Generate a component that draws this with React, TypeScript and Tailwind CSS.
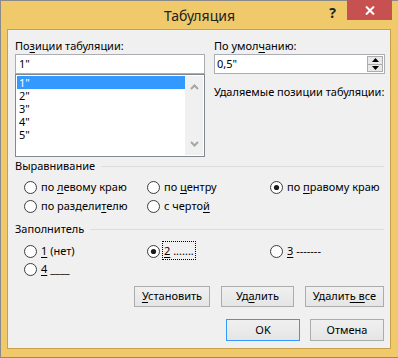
import type { ReactNode } from 'react'

const font = { fontFamily: '"Noto Sans", "Open Sans", sans-serif' }

function Radio({ checked, children }: { checked?: boolean; children: ReactNode }) {
  return (
    <div className="flex items-center gap-[4px] h-full">
      <svg width="13" height="13" viewBox="0 0 13 13" className="shrink-0">
        <circle cx="6.5" cy="6.5" r="6" fill="#fff" stroke="#3c3c3c" strokeWidth="1" />
        {checked && <circle cx="6.5" cy="6.5" r="2.6" fill="#1a1a1a" />}
      </svg>
      <span className="whitespace-nowrap">{children}</span>
    </div>
  )
}

function GroupHeader({ title }: { title: string }) {
  return (
    <div className="flex items-center h-4 pl-[7px] pr-[6px]">
      <span className="leading-4">{title}</span>
      <div className="flex-1 h-px bg-[#dcdcdc] ml-[6px]" />
    </div>
  )
}

function Btn({ w, h = 'h-[21px]', focus, children }: { w: string; h?: string; focus?: boolean; children: ReactNode }) {
  return (
    <div
      className={`${w} ${h} flex items-center justify-center border ${
        focus ? 'border-[#3399ff]' : 'border-[#acacac]'
      } bg-gradient-to-b from-[#f0f0f0] to-[#e5e5e5]`}
    >
      {children}
    </div>
  )
}

function Chevron({ up }: { up?: boolean }) {
  return (
    <svg width="9" height="6" viewBox="0 0 9 6">
      <path d={up ? 'M1 5 L4.5 1.5 L8 5' : 'M1 1 L4.5 4.5 L8 1'} fill="none" stroke="#a6a6a6" strokeWidth="2" />
    </svg>
  )
}

export default function App() {
  return (
    <div style={font} className="w-[398px] h-[358px] bg-[#f0c96b] border-l border-t border-b border-[#8a8a8a] flex flex-col text-[11px] text-black">
      {/* title bar */}
      <div className="relative h-[28px] flex items-center justify-center">
        <span className="text-[14px] text-[#222] pt-[1px]">Табуляция</span>
        <div className="absolute right-[6px] top-[-1px] flex items-start">
          <span className="text-[14px] font-bold text-[#222] mr-[11px] mt-[2px]">?</span>
          <div className="w-[45px] h-[20px] bg-[#c75050] flex items-center justify-center">
            <svg width="10" height="9" viewBox="0 0 10 9">
              <path d="M1 0.5 L9 8.5 M9 0.5 L1 8.5" stroke="#fff" strokeWidth="2" />
            </svg>
          </div>
        </div>
      </div>

      {/* client */}
      <div className="ml-[6px] w-[384px] h-[320px] border border-[#c9a04a] bg-[#f0f0f0] flex flex-col">
        <div className="flex pt-[8px] pl-[7px] gap-[9px]">
          <div className="w-[190px] flex flex-col">
            <div className="h-4 leading-4">
              По<u className="underline-offset-[2px]">з</u>иции табуляции:
            </div>
            <div className="h-[20px] border border-[#abadb3] bg-white px-[3px] leading-[18px]">1"</div>
            <div className="h-[83px] border border-[#828790] bg-white p-px flex">
              <div className="flex-1 flex flex-col">
                <div className="h-[13px] leading-[13px] px-[2px] bg-[#3399ff] text-white">1"</div>
                <div className="h-[13px] leading-[13px] px-[2px]">2"</div>
                <div className="h-[13px] leading-[13px] px-[2px]">3"</div>
                <div className="h-[13px] leading-[13px] px-[2px]">4"</div>
                <div className="h-[13px] leading-[13px] px-[2px]">5"</div>
              </div>
              <div className="w-[18px] bg-[#f0f0f0] flex flex-col items-center justify-between py-[8px]">
                <Chevron up />
                <Chevron />
              </div>
            </div>
          </div>

          <div className="w-[171px] flex flex-col">
            <div className="h-4 leading-4">
              По умол<u className="underline-offset-[2px]">ч</u>анию:
            </div>
            <div className="h-[20px] border border-[#abadb3] bg-white flex">
              <span className="flex-1 px-[2px] leading-[18px]">0,5"</span>
              <div className="w-[18px] flex flex-col p-px">
                <div className="flex-1 border border-[#acacac] bg-[#e8e8e8] flex items-center justify-center">
                  <svg width="7" height="4" viewBox="0 0 7 4"><path d="M0 4 L3.5 0 L7 4Z" fill="#000" /></svg>
                </div>
                <div className="flex-1 border border-[#acacac] border-t-0 bg-[#e8e8e8] flex items-center justify-center">
                  <svg width="7" height="4" viewBox="0 0 7 4"><path d="M0 0 L3.5 4 L7 0Z" fill="#000" /></svg>
                </div>
              </div>
            </div>
            <div className="h-4 leading-4 mt-[10px] whitespace-nowrap">Удаляемые позиции табуляции:</div>
          </div>
        </div>

        {/* alignment */}
        <div className="mt-px">
          <GroupHeader title="Выравнивание" />
        </div>
        <div className="mt-[4px] pl-[16px] grid grid-cols-[123px_123px_1fr] auto-rows-[19px]">
          <Radio>
            по <u className="underline-offset-[2px]">л</u>евому краю
          </Radio>
          <Radio>
            по <u className="underline-offset-[2px]">ц</u>ентру
          </Radio>
          <Radio checked>
            по <u className="underline-offset-[2px]">п</u>равому краю
          </Radio>
          <Radio>
            по раздели<u className="underline-offset-[2px]">т</u>елю
          </Radio>
          <Radio>
            с черто<u className="underline-offset-[2px]">й</u>
          </Radio>
        </div>

        {/* leader */}
        <div className="mt-[5px]">
          <GroupHeader title="Заполнитель" />
        </div>
        <div className="mt-[5px] pl-[16px] grid grid-cols-[123px_123px_1fr] auto-rows-[18px]">
          <Radio>
            <u className="underline-offset-[2px]">1</u> (нет)
          </Radio>
          <Radio checked>
            <span className="border border-dotted border-black px-px -ml-[2px] py-[1px]">
              <u className="underline-offset-[2px]">2</u> .......
            </span>
          </Radio>
          <Radio>
            <u className="underline-offset-[2px]">3</u> -------
          </Radio>
          <Radio>
            <u className="underline-offset-[2px]">4</u> ____
          </Radio>
        </div>

        {/* buttons */}
        <div className="mt-[8px] flex justify-end gap-[11px] pr-[6px]">
          <Btn w="w-[76px]">
            <span>
              <u className="underline-offset-[2px]">У</u>становить
            </span>
          </Btn>
          <Btn w="w-[73px]">
            <span>
              Уд<u className="underline-offset-[2px]">а</u>лить
            </span>
          </Btn>
          <Btn w="w-[79px]">
            <span>
              Удалит<u className="underline-offset-[2px]">ь в</u>се
            </span>
          </Btn>
        </div>
        <div className="mt-[12px] flex justify-end gap-[10px] pr-[6px]">
          <Btn w="w-[74px]" h="h-[22px]" focus>
            OK
          </Btn>
          <Btn w="w-[74px]" h="h-[22px]">
            Отмена
          </Btn>
        </div>
      </div>
    </div>
  )
}
